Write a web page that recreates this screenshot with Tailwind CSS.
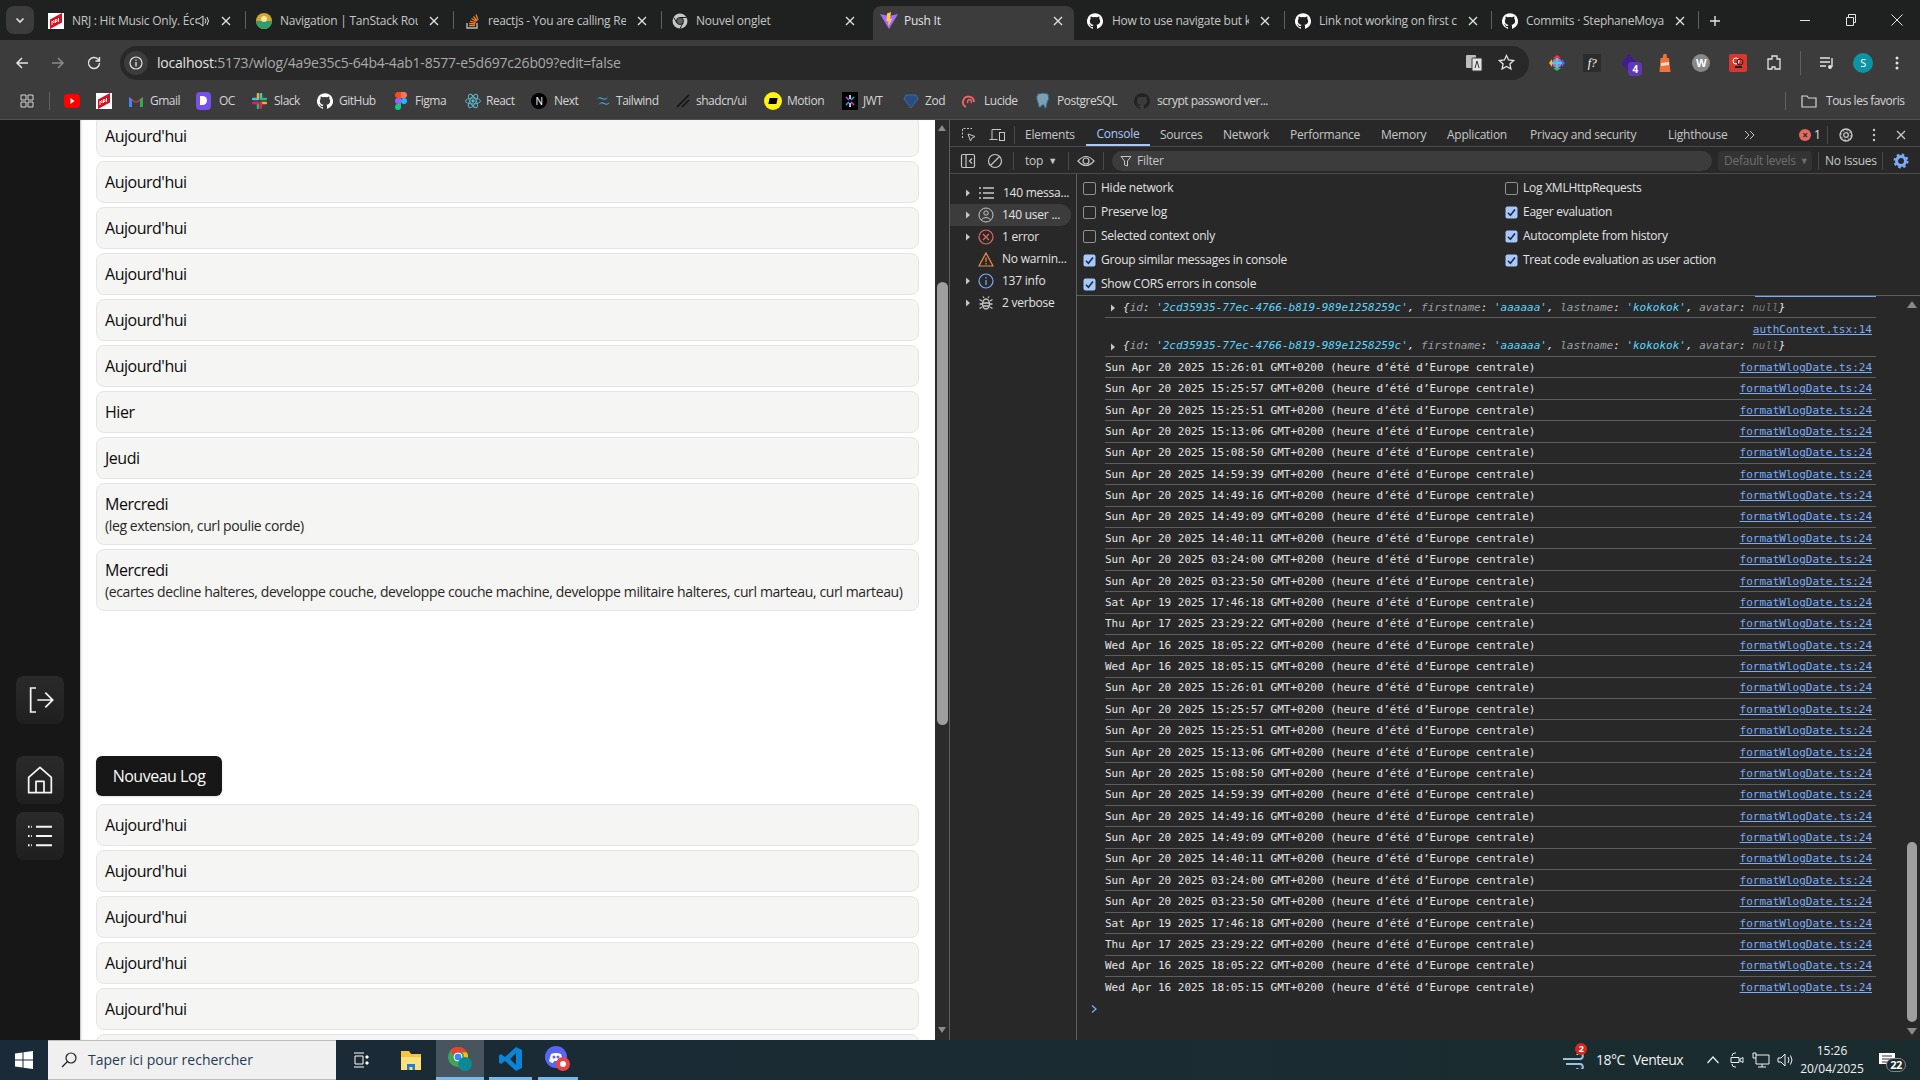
<!DOCTYPE html>
<html lang="fr">
<head>
<meta charset="utf-8">
<title>Push It</title>
<script src="https://cdn.jsdelivr.net/npm/@tailwindcss/browser@4"></script>
</head>
<body class="w-[1920px] h-[1080px] overflow-hidden flex flex-col bg-[#282828] font-['Open_Sans',sans-serif] tracking-[-0.03em]">
<svg class="hidden" width="0" height="0">
<symbol id="x" viewBox="0 0 14 14"><path d="M3 3l8 8M11 3l-8 8" stroke="currentColor" stroke-width="1.3" fill="none"/></symbol>
<symbol id="gh" viewBox="0 0 24 24"><path fill="currentColor" d="M12 .3a12 12 0 0 0-3.8 23.4c.6.1.8-.3.8-.6v-2c-3.3.7-4-1.6-4-1.6-.6-1.4-1.4-1.8-1.4-1.8-1-.7.1-.7.1-.7 1.2.1 1.8 1.2 1.8 1.2 1 1.8 2.8 1.3 3.5 1 .1-.8.4-1.3.8-1.6-2.7-.3-5.5-1.3-5.5-6 0-1.2.5-2.3 1.3-3.1-.2-.4-.6-1.6 0-3.2 0 0 1-.3 3.4 1.2a11.5 11.5 0 0 1 6 0c2.3-1.5 3.3-1.2 3.3-1.2.7 1.6.2 2.8.1 3.2.8.8 1.3 1.9 1.3 3.1 0 4.6-2.8 5.7-5.5 6 .4.4.8 1.1.8 2.2v3.3c0 .3.2.7.8.6A12 12 0 0 0 12 .3"/></symbol>
<symbol id="nrj" viewBox="0 0 16 16"><rect width="16" height="16" fill="#fff"/><path d="M2 16V6.500L14 0v9.500z" fill="#d8101f"/><path d="M4 12V8l2 2V7M7.500 10V6.500h1.500v2H7.500M10.500 9V5" stroke="#fff" fill="none" stroke-width=".9"/></symbol>
<symbol id="chev" viewBox="0 0 10 10"><path d="M3 1.5l4 3.5-4 3.5z" fill="currentColor"/></symbol>
<symbol id="check" viewBox="0 0 13 13"><rect x=".5" y=".5" width="12" height="12" rx="2" fill="#a8c7fa"/><path d="M3 6.8l2.4 2.5L10 3.6" stroke="#1f2d45" stroke-width="1.6" fill="none"/></symbol>
</svg>

<!-- Tab strip -->
<div class="h-10 shrink-0 bg-[#1f2020] flex items-end text-xs text-[#c4c7c5] tracking-[-0.02em]">
  <div class="w-[40px] h-[34px] pl-[6px]"><div class="w-7 h-7 rounded-lg bg-[#3c3c3c] flex items-center justify-center"><svg width="12" height="12" viewBox="0 0 12 12"><path d="M2.5 4.5L6 8l3.5-3.5" stroke="#e3e3e3" stroke-width="1.6" fill="none"/></svg></div></div>
  <div class="w-[205px] h-[34px] flex items-center pl-2 pb-1"><svg class="w-4 h-4 shrink-0"><use href="#nrj"/></svg><span class="ml-2 w-[122px] overflow-hidden whitespace-nowrap">NRJ : Hit Music Only. Écoutez</span><svg class="w-4 h-4 shrink-0" viewBox="0 0 16 16"><path d="M2 6h3l4-3v10l-4-3H2zM11 5.5q2 2.500 0 5M13 4q3 4 0 8" stroke="#e3e3e3" fill="none"/></svg><svg class="w-[14px] h-[14px] ml-[9px] shrink-0 text-[#e3e3e3]"><use href="#x"/></svg></div>
  <i class="w-px h-[18px] mb-[11px] bg-[#5f6061]"></i>
  <div class="w-[207px] h-[34px] flex items-center pl-[10px] pb-1"><svg class="w-4 h-4 shrink-0" viewBox="0 0 16 16"><circle cx="8" cy="8" r="8" fill="#d9a62e"/><path d="M0 8a8 8 0 0 0 16 0z" fill="#2f9e6e"/><circle cx="8" cy="6" r="3" fill="#f2e7a0"/></svg><span class="ml-2 w-[138px] overflow-hidden whitespace-nowrap">Navigation | TanStack Router</span><svg class="w-[14px] h-[14px] ml-[9px] shrink-0 text-[#e3e3e3]"><use href="#x"/></svg></div>
  <i class="w-px h-[18px] mb-[11px] bg-[#5f6061]"></i>
  <div class="w-[207px] h-[34px] flex items-center pl-[10px] pb-1"><svg class="w-4 h-4 shrink-0" viewBox="0 0 16 16"><path d="M3 10v5h10v-5" stroke="#bcbbbb" stroke-width="1.4" fill="none"/><path d="M5 12.500h6M5.300 10.300l5.900.6M6 8l5.500 1.700M7.500 5.500l5 3M9.500 3.500l3.500 4.500M12 1.500l2 5.500" stroke="#f48024" stroke-width="1.300" fill="none"/></svg><span class="ml-2 w-[138px] overflow-hidden whitespace-nowrap">reactjs - You are calling ReactDOM</span><svg class="w-[14px] h-[14px] ml-[9px] shrink-0 text-[#e3e3e3]"><use href="#x"/></svg></div>
  <i class="w-px h-[18px] mb-[11px] bg-[#5f6061]"></i>
  <div class="w-[211px] h-[34px] flex items-center pl-[10px] pb-1"><svg class="w-4 h-4 shrink-0" viewBox="0 0 16 16"><circle cx="8" cy="8" r="7.500" fill="#c4c7c5"/><circle cx="8" cy="8" r="3.500" fill="#5f6368" stroke="#1f2020"/><path d="M8 4.500h6.500M5 10L1.800 4.500M11 10L8 15.500" stroke="#1f2020"/></svg><span class="ml-2 w-[138px] overflow-hidden whitespace-nowrap">Nouvel onglet</span><svg class="w-[14px] h-[14px] ml-[9px] shrink-0 text-[#e3e3e3]"><use href="#x"/></svg></div>
  <div class="w-[201px] h-[34px] flex items-center pl-[7px] pb-1 bg-[#3c3c3c] rounded-t-lg text-[#e3e3e3]"><svg class="w-[18px] h-[18px] shrink-0" viewBox="0 0 18 18"><path d="M0 2l9 15L18 2l-9 2z" fill="#a56bff"/><path d="M11 0L7 1.500 6.500 9l2 .5-.5 5 4.500-8-2.500.5z" fill="#ffcb3d"/></svg><span class="ml-[6px] w-[138px] overflow-hidden whitespace-nowrap">Push It</span><svg class="w-[14px] h-[14px] ml-[9px] shrink-0"><use href="#x"/></svg></div>
  <div class="w-[210px] h-[34px] flex items-center pl-[13px] pb-1"><svg class="w-4 h-4 shrink-0 text-white"><use href="#gh"/></svg><span class="ml-[9px] w-[137px] overflow-hidden whitespace-nowrap">How to use navigate but keep</span><svg class="w-[14px] h-[14px] ml-[9px] shrink-0 text-[#e3e3e3]"><use href="#x"/></svg></div>
  <i class="w-px h-[18px] mb-[11px] bg-[#5f6061]"></i>
  <div class="w-[206px] h-[34px] flex items-center pl-[10px] pb-1"><svg class="w-4 h-4 shrink-0 text-white"><use href="#gh"/></svg><span class="ml-2 w-[138px] overflow-hidden whitespace-nowrap">Link not working on first click</span><svg class="w-[14px] h-[14px] ml-[9px] shrink-0 text-[#e3e3e3]"><use href="#x"/></svg></div>
  <i class="w-px h-[18px] mb-[11px] bg-[#5f6061]"></i>
  <div class="w-[206px] h-[34px] flex items-center pl-[10px] pb-1"><svg class="w-4 h-4 shrink-0 text-white"><use href="#gh"/></svg><span class="ml-2 w-[138px] overflow-hidden whitespace-nowrap">Commits · StephaneMoya/push</span><svg class="w-[14px] h-[14px] ml-[9px] shrink-0 text-[#e3e3e3]"><use href="#x"/></svg></div>
  <i class="w-px h-[18px] mb-[11px] bg-[#5f6061]"></i>
  <div class="w-[32px] h-[34px] flex items-center justify-center pb-1"><svg width="12" height="12" viewBox="0 0 12 12"><path d="M6 1v10M1 6h10" stroke="#e3e3e3" stroke-width="1.400"/></svg></div>
  <div class="w-[51px]"></div>
  <div class="w-[46px] h-10 flex items-center justify-center"><svg width="10" height="10" viewBox="0 0 10 10"><path d="M0 5.500h10" stroke="#e3e3e3"/></svg></div>
  <div class="w-[46px] h-10 flex items-center justify-center"><svg width="12" height="12" viewBox="0 0 12 12"><path d="M1.500 3.500h7v8h-7zM3.500 3.500v-3h7v8h-2" stroke="#e3e3e3" fill="none"/></svg></div>
  <div class="w-[46px] h-10 flex items-center justify-center"><svg width="12" height="12" viewBox="0 0 12 12"><path d="M.5.500l11 11M11.500.500l-11 11" stroke="#e3e3e3"/></svg></div>
</div>

<!-- Address toolbar -->
<div class="h-[45px] shrink-0 bg-[#3c3c3c] flex items-center text-[#c7c7c7]">
  <div class="w-[40px] flex justify-center pl-1"><svg width="16" height="16" viewBox="0 0 16 16"><path d="M14 8H3M8 3L3 8l5 5" stroke="#e3e3e3" stroke-width="1.500" fill="none"/></svg></div>
  <div class="w-[36px] flex justify-center"><svg width="16" height="16" viewBox="0 0 16 16"><path d="M2 8h11M8 3l5 5-5 5" stroke="#8a8a8a" stroke-width="1.500" fill="none"/></svg></div>
  <div class="w-[36px] flex justify-center"><svg width="16" height="16" viewBox="0 0 16 16"><path d="M13.500 8a5.500 5.500 0 1 1-1.600-3.900L13.500 6M13.500 2v4h-4" stroke="#e3e3e3" stroke-width="1.400" fill="none"/></svg></div>
  <div class="ml-2 w-[1409px] h-[34px] rounded-full bg-[#282828] flex items-center pl-1 text-[#e3e3e3] text-sm">
    <div class="w-6 h-6 rounded-full bg-[#3c3c3c] flex items-center justify-center"><svg width="14" height="14" viewBox="0 0 14 14"><circle cx="7" cy="7" r="6" stroke="#e3e3e3" stroke-width="1.200" fill="none"/><path d="M7 6v4.500M7 3.500v1.300" stroke="#e3e3e3" stroke-width="1.300"/></svg></div>
    <span class="ml-[9px] whitespace-nowrap tracking-[-0.015em]">localhost<span class="text-[#a8abaa]">:5173/wlog/4a9e35c5-64b4-4ab1-8577-e5d697c26b09?edit=false</span></span>
    <div class="ml-auto w-[33px] flex justify-center"><svg width="18" height="18" viewBox="0 0 18 18"><rect x="1" y="1" width="10" height="13" rx="1" fill="#bdbdbd"/><rect x="7" y="4" width="10" height="13" rx="1" fill="#e3e3e3" stroke="#3c3c3c"/><path d="M10 14l2-7 2 7" stroke="#333" fill="none"/></svg></div>
    <div class="w-[33px] mr-[6px] flex justify-center"><svg width="17" height="17" viewBox="0 0 17 17"><path d="M8.500 1.500l2.100 4.500 5 .6-3.700 3.400 1 4.900-4.400-2.500-4.400 2.500 1-4.900L1.400 6.600l5-.6z" stroke="#e3e3e3" stroke-width="1.300" fill="none"/></svg></div>
  </div>
  <div class="w-[45px] flex justify-end pr-[8px]"><svg width="18" height="18" viewBox="0 0 18 18"><path d="M9 1l4 3H5z" fill="#f33"/><path d="M17 9l-3 4V5z" fill="#3d6cff"/><path d="M9 17l-4-3h8z" fill="#28c760"/><path d="M1 9l3-4v8z" fill="#ffc400"/><circle cx="9" cy="9" r="5" fill="#b56bd6"/><path d="M9 4v10M4 9h10" stroke="#3fd4d4" stroke-width="2"/></svg></div>
  <div class="w-[36px] flex justify-center"><span class="w-[18px] h-[18px] bg-[#2c2c2c] text-white italic text-[12px] text-center leading-[18px] font-['Liberation_Serif',serif]">f?</span></div>
  <div class="w-[37px] flex justify-center relative"><svg width="20" height="18" viewBox="0 0 20 18"><path d="M10 0l8 9-8 9-8-9z" fill="#3e1f8f"/></svg><span class="absolute left-[18px] top-[8px] w-[14px] h-[14px] rounded-sm bg-[#5f39b5] text-white font-bold text-[10px] text-center leading-[14px]">4</span></div>
  <div class="w-[36px] flex justify-center"><svg width="16" height="20" viewBox="0 0 16 20"><path d="M6.500 1h3l.5 4h2l1.500 14h-11L3.500 5h2z" fill="#f2703a"/><path d="M4 10l8-1v3l-8 1z" fill="#ffe0cc"/></svg></div>
  <div class="w-[36px] flex justify-center"><span class="w-[18px] h-[18px] rounded-full bg-[#888] text-white text-[11px] font-bold text-center leading-[18px]">W</span></div>
  <div class="w-[37px] flex justify-center"><svg width="18" height="18" viewBox="0 0 18 18"><rect width="18" height="18" rx="2" fill="#d8382e"/><circle cx="7" cy="7" r="3" stroke="#fff" fill="none"/><circle cx="11" cy="8" r="3" stroke="#222" fill="none"/><path d="M6 13h7" stroke="#222" stroke-width="2"/></svg></div>
  <div class="w-[36px] flex justify-center"><svg width="18" height="18" viewBox="0 0 18 18"><path d="M7 2h5v3h3v10h-5v-2h-3v2H3V5h4z" stroke="#e3e3e3" stroke-width="1.300" fill="none"/></svg></div>
  <i class="w-px h-6 ml-[8px] bg-[#5f6061]"></i>
  <div class="w-[52px] flex justify-center"><svg width="16" height="16" viewBox="0 0 16 16"><path d="M1 3h10M1 7h10M1 11h6" stroke="#e3e3e3" stroke-width="1.400"/><path d="M13 3v9" stroke="#e3e3e3" stroke-width="1.400"/><circle cx="11" cy="12" r="2" fill="#e3e3e3"/></svg></div>
  <div class="w-[20px] h-[20px] rounded-full bg-[#0b95a6] text-white text-[11px] text-center leading-[20px]">S</div>
  <div class="w-[38px] pl-[10px] flex justify-center"><svg width="16" height="16" viewBox="0 0 16 16"><circle cx="8" cy="3" r="1.500" fill="#e3e3e3"/><circle cx="8" cy="8" r="1.500" fill="#e3e3e3"/><circle cx="8" cy="13" r="1.500" fill="#e3e3e3"/></svg></div>
</div>

<!-- Bookmarks bar -->
<div class="h-[35px] shrink-0 bg-[#3c3c3c] border-b border-[#505050] pb-[3px] flex items-center text-xs text-[#d5d5d5] whitespace-nowrap">
  <div class="w-[49px] flex justify-center pl-1"><svg width="14" height="14" viewBox="0 0 14 14"><path d="M1 1h5v5H1zM8 1h5v5H8zM1 8h5v5H1zM8 8h5v5H8z" stroke="#d5d5d5" fill="none"/></svg></div>
  <i class="w-px h-[18px] bg-[#5f6061]"></i>
  <div class="w-[30px] flex justify-end"><svg width="16" height="16" viewBox="0 0 16 16"><rect x="0" y="1" width="16" height="14" rx="3.500" fill="#f00"/><path d="M6.500 5l4 3-4 3z" fill="#fff"/></svg></div>
  <div class="w-[32px] flex justify-end"><svg class="w-4 h-4"><use href="#nrj"/></svg></div>
  <div class="w-[76px] pl-[16px] flex items-center"><svg class="w-4 h-4 shrink-0" viewBox="0 0 16 16"><path d="M1 14V4l7 5 7-5v10h-3V7.500L8 10 4 7.500V14z" fill="#ea4335"/><path d="M1 14V4l3 2.500V14z" fill="#4285f4"/><path d="M15 14V4l-3 2.500V14z" fill="#34a853"/></svg><span class="ml-[6px]">Gmail</span></div>
  <div class="w-[56px] flex items-center pl-[8px]"><span class="w-[15px] h-[18px] rounded-[4px] bg-[#7451eb] flex items-center justify-center"><i class="w-[7px] h-[9px] rounded-r-full bg-white"></i></span><span class="ml-[8px]">OC</span></div>
  <div class="w-[65px] flex items-center pl-[8px]"><svg class="w-[15px] h-[16px] shrink-0" viewBox="0 0 15 16"><path d="M1 6h5M9 1v5" stroke="#36c5f0" stroke-width="2.500" stroke-linecap="round"/><path d="M9 6h5M6 10v5" stroke="#2eb67d" stroke-width="2.500" stroke-linecap="round"/><path d="M9 10h5M6 1v4" stroke="#ecb22e" stroke-width="2.500" stroke-linecap="round"/><path d="M1 10h5M9 10v5" stroke="#e01e5a" stroke-width="2.500" stroke-linecap="round"/></svg><span class="ml-[7px]">Slack</span></div>
  <div class="w-[76px] flex items-center pl-[8px]"><svg class="w-4 h-4 shrink-0 text-white"><use href="#gh"/></svg><span class="ml-[6px]">GitHub</span></div>
  <div class="w-[72px] flex items-center pl-[10px]"><svg class="w-[12px] h-[18px] shrink-0" viewBox="0 0 12 18"><path d="M6 0H3a3 3 0 0 0 0 6h3z" fill="#f24e1e"/><path d="M6 0h3a3 3 0 0 1 0 6H6z" fill="#ff7262"/><path d="M6 6H3a3 3 0 0 0 0 6h3z" fill="#a259ff"/><circle cx="9" cy="9" r="3" fill="#1abcfe"/><path d="M6 12H3a3 3 0 1 0 3 3z" fill="#0acf83"/></svg><span class="ml-[8px]">Figma</span></div>
  <div class="w-[66px] flex items-center pl-[8px]"><svg class="w-4 h-4 shrink-0" viewBox="0 0 16 16" fill="none" stroke="#5fb5c9" stroke-width=".9"><ellipse cx="8" cy="8" rx="7.500" ry="3"/><ellipse cx="8" cy="8" rx="7.500" ry="3" transform="rotate(60 8 8)"/><ellipse cx="8" cy="8" rx="7.500" ry="3" transform="rotate(120 8 8)"/><circle cx="8" cy="8" r="1.200" fill="#5fb5c9"/></svg><span class="ml-[5px]">React</span></div>
  <div class="w-[64px] flex items-center pl-[8px]"><span class="w-4 h-4 shrink-0 rounded-full bg-black text-white text-[10px] text-center leading-4">N</span><span class="ml-[7px]">Next</span></div>
  <div class="w-[80px] flex items-center pl-[8px]"><svg class="w-4 h-4 shrink-0" viewBox="0 0 16 16"><path d="M1 7q3-4 6-2t6-1q-2 4-6 2T1 7zM3 12q3-4 6-2t6-1q-2 4-6 2-3-2-6 1z" fill="#38bdf8"/></svg><span class="ml-[5px]">Tailwind</span></div>
  <div class="w-[90px] flex items-center pl-[8px]"><svg class="w-[16px] h-4 shrink-0" viewBox="0 0 16 16"><path d="M2 14L14 2M7 14l7-7" stroke="#111" stroke-width="1.500"/></svg><span class="ml-[5px]">shadcn/ui</span></div>
  <div class="w-[77px] flex items-center pl-[7px]"><span class="w-[18px] h-[18px] shrink-0 rounded-full bg-[#fff312] flex items-center justify-center"><i class="w-2 h-[6px] bg-black -skew-x-12"></i></span><span class="ml-[5px]">Motion</span></div>
  <div class="w-[61px] flex items-center pl-[8px]"><svg class="w-4 h-[18px] shrink-0" viewBox="0 0 16 18"><rect width="16" height="18" fill="#000"/><path d="M8 3v4M8 11v4" stroke="#fff" stroke-width="1.500"/><path d="M4 5l3 3M12 13l-3-3" stroke="#d63aff" stroke-width="1.500"/><path d="M12 5l-3 3M4 13l3-3" stroke="#00b9f1" stroke-width="1.500"/></svg><span class="ml-[5px]">JWT</span></div>
  <div class="w-[58px] flex items-center pl-[8px]"><svg class="w-4 h-4 shrink-0" viewBox="0 0 16 16"><path d="M3 2h10l2 4-7 9-7-9z" fill="#274d82" stroke="#3e6ba8"/></svg><span class="ml-[6px]">Zod</span></div>
  <div class="w-[74px] flex items-center pl-[9px]"><svg class="w-[14px] h-4 shrink-0" viewBox="0 0 14 16"><path d="M4 14A5.500 5.500 0 1 1 12 9" stroke="#f56565" stroke-width="1.800" fill="none"/><path d="M6 10a2 2 0 1 1 3 0" stroke="#f56565" stroke-width="1.500" fill="none"/></svg><span class="ml-[8px]">Lucide</span></div>
  <div class="w-[99px] flex items-center pl-[8px]"><svg class="w-4 h-[18px] shrink-0" viewBox="0 0 16 18"><path d="M3 2q5-2 10 0 2 4-1 9l-1 5q-2 1-2-3H7q-1 3-3 2-1-5-2-7-1-4 1-6z" fill="#7d9fb3" stroke="#31648c"/></svg><span class="ml-[6px]">PostgreSQL</span></div>
  <div class="w-[660px] flex items-center pl-[8px]"><svg class="w-4 h-4 shrink-0 text-[#222]"><use href="#gh"/></svg><span class="ml-[7px] w-[120px]">scrypt password ver...</span><i class="w-px h-[18px] ml-[508px] bg-[#5f6061]"></i></div>
  <div class="flex items-center pl-[15px]"><svg class="shrink-0" width="16" height="14" viewBox="0 0 16 14"><path d="M1 2h5l1.500 2H15v9H1z" stroke="#d5d5d5" stroke-width="1.200" fill="none"/></svg><span class="ml-[9px]">Tous les favoris</span></div>
</div>

<!-- Content -->
<div class="flex-1 min-h-0 flex">
  <aside class="w-[80px] shrink-0 bg-[#171717] flex flex-col items-center pt-[556px]">
    <div class="w-12 h-12 rounded-lg bg-gradient-to-b from-[#2a2a2a] to-[#1f1f1f] flex items-center justify-center"><svg width="32" height="32" viewBox="0 0 24 24" fill="none" stroke="#f5f5f5" stroke-width="1.300"><path d="M9 3H5v18h4M10 12h11M16 6.500l5.500 5.500-5.500 5.500"/></svg></div>
    <div class="mt-8 w-12 h-12 rounded-lg bg-gradient-to-b from-[#2a2a2a] to-[#1f1f1f] flex items-center justify-center"><svg width="32" height="32" viewBox="0 0 24 24" fill="none" stroke="#f5f5f5" stroke-width="1.300" stroke-linejoin="round"><path d="M3.500 10L12 2.500 20.500 10v11.500h-17zM9 21.500V13h6v8.500"/></svg></div>
    <div class="mt-2 w-12 h-12 rounded-lg bg-gradient-to-b from-[#2a2a2a] to-[#1f1f1f] flex items-center justify-center"><svg width="32" height="32" viewBox="0 0 24 24" fill="none" stroke="#f5f5f5" stroke-width="1.500"><path d="M9 5h12M9 12h12M9 19h12"/><path d="M3 5h3M3 12h3M3 19h3" stroke-dasharray="1.200 1.200"/></svg></div>
  </aside>
  <main class="w-[855px] shrink-0 bg-white overflow-hidden shadow-[inset_2px_0_2px_-1px_#bbb] px-4 text-base text-stone-950 flex flex-col gap-1">
    <div class="-mt-[5px] shrink-0 p-2 border border-stone-200 rounded-lg bg-stone-100">Aujourd'hui</div>
    <div class="shrink-0 p-2 border border-stone-200 rounded-lg bg-stone-100">Aujourd'hui</div>
    <div class="shrink-0 p-2 border border-stone-200 rounded-lg bg-stone-100">Aujourd'hui</div>
    <div class="shrink-0 p-2 border border-stone-200 rounded-lg bg-stone-100">Aujourd'hui</div>
    <div class="shrink-0 p-2 border border-stone-200 rounded-lg bg-stone-100">Aujourd'hui</div>
    <div class="shrink-0 p-2 border border-stone-200 rounded-lg bg-stone-100">Aujourd'hui</div>
    <div class="shrink-0 p-2 border border-stone-200 rounded-lg bg-stone-100">Hier</div>
    <div class="shrink-0 p-2 border border-stone-200 rounded-lg bg-stone-100">Jeudi</div>
    <div class="shrink-0 p-2 border border-stone-200 rounded-lg bg-stone-100">Mercredi<p class="text-sm text-stone-800 tracking-[-0.027em]">(leg extension, curl poulie corde)</p></div>
    <div class="shrink-0 p-2 border border-stone-200 rounded-lg bg-stone-100 whitespace-nowrap">Mercredi<p class="text-sm text-stone-800 tracking-[-0.027em]">(ecartes decline halteres, developpe couche, developpe couche machine, developpe militaire halteres, curl marteau, curl marteau)</p></div>
    <button class="mt-[141px] mb-1 shrink-0 self-start w-[126px] h-10 rounded-md bg-[#171717] text-[#fafafa] shadow-sm">Nouveau Log</button>
    <div class="shrink-0 p-2 border border-stone-200 rounded-lg bg-stone-100">Aujourd'hui</div>
    <div class="shrink-0 p-2 border border-stone-200 rounded-lg bg-stone-100">Aujourd'hui</div>
    <div class="shrink-0 p-2 border border-stone-200 rounded-lg bg-stone-100">Aujourd'hui</div>
    <div class="shrink-0 p-2 border border-stone-200 rounded-lg bg-stone-100">Aujourd'hui</div>
    <div class="shrink-0 p-2 border border-stone-200 rounded-lg bg-stone-100">Aujourd'hui</div>
    <div class="shrink-0 p-2 border border-stone-200 rounded-lg bg-stone-100">Aujourd'hui</div>
  </main>
  <!-- page scrollbar -->
  <div class="w-[15px] shrink-0 bg-[#2b2b2b] flex flex-col items-center border-r border-[#5e5e5e]">
    <svg class="mt-[4px]" width="10" height="8" viewBox="0 0 10 8"><path d="M5 1l4 6H1z" fill="#8a8a8a"/></svg>
    <div class="mt-[150px] w-[11px] h-[443px] rounded-full bg-[#9e9e9e]"></div>
    <svg class="mt-auto mb-[6px]" width="10" height="8" viewBox="0 0 10 8"><path d="M5 7L1 1h8z" fill="#8a8a8a"/></svg>
  </div>

  <!-- DevTools -->
  <section class="flex-1 min-w-0 bg-[#282828] text-[#e3e3e3] text-xs tracking-[-0.02em] flex flex-col relative">
    <div class="h-[27px] shrink-0 border-b border-[#4a4a4a] pt-[4px] flex items-center text-[#c7c7c7] whitespace-nowrap">
      <div class="w-[28px] flex justify-end pr-[1px]"><svg width="16" height="16" viewBox="0 0 16 16" fill="none" stroke="#c7c7c7"><path d="M1.500 11V1.500H11" stroke-dasharray="2 1.500"/><path d="M7 7l7 2.500-3 1.500-1.500 3z"/></svg></div>
      <div class="w-[28px] flex justify-end"><svg width="17" height="15" viewBox="0 0 17 15" fill="none" stroke="#c7c7c7"><path d="M3 11V1.500h9M.5 11.500h8"/><rect x="10.500" y="4.500" width="5" height="8"/></svg></div>
      <i class="w-px h-[18px] ml-[8px] bg-[#4a4a4a]"></i>
      <div class="w-[71px] pl-[10px]">Elements</div>
      <div class="w-[64px] h-[22px] flex items-center justify-center text-[#a8c7fa] border-b-2 border-[#a8c7fa]">Console</div>
      <div class="w-[63px] pl-[10px]">Sources</div>
      <div class="w-[67px] pl-[10px]">Network</div>
      <div class="w-[91px] pl-[10px]">Performance</div>
      <div class="w-[66px] pl-[10px]">Memory</div>
      <div class="w-[83px] pl-[10px]">Application</div>
      <div class="w-[148px] pl-[10px]">Privacy and security</div>
      <div class="w-[75px]">Lighthouse</div>
      <svg width="12" height="12" viewBox="0 0 12 12" fill="none" stroke="#c7c7c7"><path d="M2 2l4 4-4 4M7 2l4 4-4 4"/></svg>
      <div class="ml-[44px] w-[26px] flex items-center"><span class="w-3 h-3 rounded-full bg-[#e46962] text-[#282828] text-[10px] leading-3 text-center font-bold">×</span><span class="ml-[3px] text-[#e3e3e3]">1</span></div>
      <i class="w-px h-[18px] ml-[2px] bg-[#4a4a4a]"></i>
      <div class="w-[36px] flex justify-center"><svg width="16" height="16" viewBox="0 0 16 16" fill="none" stroke="#c7c7c7" stroke-width="1.300"><circle cx="8" cy="8" r="2.300"/><circle cx="8" cy="8" r="5.200" stroke-width="2.600" stroke-dasharray="2 2" opacity=".5"/><circle cx="8" cy="8" r="6"/></svg></div>
      <div class="w-[20px] flex justify-center"><svg width="4" height="14" viewBox="0 0 4 14"><circle cx="2" cy="2" r="1.200" fill="#c7c7c7"/><circle cx="2" cy="7" r="1.200" fill="#c7c7c7"/><circle cx="2" cy="12" r="1.200" fill="#c7c7c7"/></svg></div>
      <div class="w-[34px] flex justify-center"><svg width="14" height="14"><use href="#x"/></svg></div>
    </div>
    <div class="h-[27px] shrink-0 border-b border-[#4a4a4a] pt-[2px] flex items-center text-[#c7c7c7] whitespace-nowrap">
      <div class="w-[26px] flex justify-end"><svg width="16" height="16" viewBox="0 0 16 16" fill="none" stroke="#c7c7c7" stroke-width="1.200"><rect x="1.500" y="1.500" width="13" height="13" rx="1.500"/><path d="M6 2v12M12 5.500L9.500 8l2.500 2.500" /></svg></div>
      <div class="w-[27px] flex justify-end"><svg width="16" height="16" viewBox="0 0 16 16" fill="none" stroke="#c7c7c7" stroke-width="1.200"><circle cx="8" cy="8" r="6.500"/><path d="M3.500 12.500l9-9"/></svg></div>
      <i class="w-px h-[18px] ml-[10px] bg-[#4a4a4a]"></i>
      <div class="w-[54px] pl-[11px] flex items-center">top<span class="ml-[5px] text-[9px]">▼</span></div>
      <i class="w-px h-[18px] bg-[#4a4a4a]"></i>
      <div class="w-[34px] flex justify-center"><svg width="18" height="14" viewBox="0 0 18 14" fill="none" stroke="#c7c7c7" stroke-width="1.200"><path d="M1 7q8-9 16 0-8 9-16 0z"/><circle cx="9" cy="7" r="3"/></svg></div>
      <i class="w-px h-[18px] bg-[#4a4a4a]"></i>
      <div class="ml-[8px] w-[600px] h-5 rounded-full bg-[#3c3c3c] flex items-center pl-[8px]"><svg width="12" height="12" viewBox="0 0 12 12" fill="none" stroke="#c7c7c7"><path d="M1 1.500h10L7.500 6v5l-3-1V6z"/></svg><span class="ml-[5px]">Filter</span></div>
      <div class="ml-[6px] w-[94px] h-5 rounded bg-[#333333] text-[#6f6f6f] flex items-center pl-[6px]">Default levels<span class="ml-[4px] text-[9px]">▼</span></div>
      <i class="w-px h-[18px] ml-[6px] bg-[#4a4a4a]"></i>
      <div class="w-[63px] pl-[6px]">No Issues</div>
      <i class="w-px h-[18px] bg-[#4a4a4a]"></i>
      <div class="w-[35px] flex justify-center"><svg width="16" height="16" viewBox="0 0 16 16"><circle cx="8" cy="8" r="4.500" fill="none" stroke="#7cacf8" stroke-width="3"/><circle cx="8" cy="8" r="6.500" fill="none" stroke="#7cacf8" stroke-width="2" stroke-dasharray="2.500 2.600"/></svg></div>
    </div>
    <div class="flex-1 min-h-0 flex">
      <!-- Console sidebar -->
      <div class="w-[127px] shrink-0 border-r border-[#5e5e5e] pt-[8px] pr-[5px] whitespace-nowrap">
        <div class="h-[22px] flex items-center pl-[13px]"><svg class="w-[10px] h-[10px] text-[#c7c7c7]"><use href="#chev"/></svg><svg class="ml-[6px]" width="16" height="14" viewBox="0 0 16 14"><path d="M0 2h2M0 7h2M0 12h2M4 2h11M4 7h11M4 12h11" stroke="#c7c7c7" stroke-width="1.300"/></svg><span class="ml-[8px] w-[66px]">140 messa...</span></div>
        <div class="h-[22px] flex items-center pl-[13px] bg-[#3c3c3c] rounded-r-full"><svg class="w-[10px] h-[10px] text-[#c7c7c7]"><use href="#chev"/></svg><svg class="ml-[5px]" width="16" height="16" viewBox="0 0 16 16" fill="none" stroke="#c7c7c7"><circle cx="8" cy="8" r="7"/><circle cx="8" cy="6" r="2.200"/><path d="M3.500 12.500q4.500-4 9 0"/></svg><span class="ml-[8px]">140 user ...</span></div>
        <div class="h-[22px] flex items-center pl-[13px]"><svg class="w-[10px] h-[10px] text-[#c7c7c7]"><use href="#chev"/></svg><svg class="ml-[5px]" width="16" height="16" viewBox="0 0 16 16" fill="none" stroke="#e46962" stroke-width="1.200"><circle cx="8" cy="8" r="7"/><path d="M5 5l6 6M11 5l-6 6"/></svg><span class="ml-[8px]">1 error</span></div>
        <div class="h-[22px] flex items-center pl-[28px]"><svg width="16" height="15" viewBox="0 0 16 15" fill="none" stroke="#ee8a4a" stroke-width="1.200"><path d="M8 1l7 13H1zM8 5.500v4.500M8 11v1.500"/></svg><span class="ml-[8px]">No warnin...</span></div>
        <div class="h-[22px] flex items-center pl-[13px]"><svg class="w-[10px] h-[10px] text-[#c7c7c7]"><use href="#chev"/></svg><svg class="ml-[5px]" width="16" height="16" viewBox="0 0 16 16" fill="none" stroke="#7cacf8" stroke-width="1.200"><circle cx="8" cy="8" r="7"/><path d="M8 7v5M8 4v1.500"/></svg><span class="ml-[8px]">137 info</span></div>
        <div class="h-[22px] flex items-center pl-[13px]"><svg class="w-[10px] h-[10px] text-[#c7c7c7]"><use href="#chev"/></svg><svg class="ml-[5px]" width="16" height="16" viewBox="0 0 16 16" fill="none" stroke="#c7c7c7" stroke-width="1.300"><ellipse cx="8" cy="9" rx="3.500" ry="5"/><path d="M4 6L1.500 4.500M12 6l2.500-1.500M4 9H1.500M12 9h2.500M4 12l-2.500 1.500M12 12l2.500 1.500M6 3L5 1.500M10 3l1-1.500M5 8h6M5 11h6"/></svg><span class="ml-[8px]">2 verbose</span></div>
      </div>
      <div class="flex-1 min-w-0 flex flex-col">
        <!-- Settings -->
        <div class="h-[122px] shrink-0 border-b border-[#5e5e5e] pt-[2px] grid grid-cols-[422px_1fr] auto-rows-[24px] pl-[6px] whitespace-nowrap">
          <label class="flex items-center gap-[4px]"><i class="w-[13px] h-[13px] rounded-[2px] border border-[#8e918f] mr-[1px]"></i>Hide network</label>
          <label class="flex items-center gap-[4px]"><i class="w-[13px] h-[13px] rounded-[2px] border border-[#8e918f] mr-[1px]"></i>Log XMLHttpRequests</label>
          <label class="flex items-center gap-[4px]"><i class="w-[13px] h-[13px] rounded-[2px] border border-[#8e918f] mr-[1px]"></i>Preserve log</label>
          <label class="flex items-center gap-[5px]"><svg width="13" height="13"><use href="#check"/></svg>Eager evaluation</label>
          <label class="flex items-center gap-[4px]"><i class="w-[13px] h-[13px] rounded-[2px] border border-[#8e918f] mr-[1px]"></i>Selected context only</label>
          <label class="flex items-center gap-[5px]"><svg width="13" height="13"><use href="#check"/></svg>Autocomplete from history</label>
          <label class="flex items-center gap-[5px]"><svg width="13" height="13"><use href="#check"/></svg>Group similar messages in console</label>
          <label class="flex items-center gap-[5px]"><svg width="13" height="13"><use href="#check"/></svg>Treat code evaluation as user action</label>
          <label class="flex items-center gap-[5px]"><svg width="13" height="13"><use href="#check"/></svg>Show CORS errors in console</label>
        </div>
        <!-- Log -->
        <div class="flex-1 min-h-0 relative font-['DejaVu_Sans_Mono',monospace] text-[11px] tracking-normal whitespace-nowrap pl-[28px] w-[799px]">
          <div class="absolute right-0 top-0 w-[121px] h-px bg-[#7cacf8]"></div>
          <div class="h-[22px] border-b border-[#5e5e5e] pt-[3px] flex items-center italic"><svg class="ml-[3px] w-[10px] h-[10px] text-[#c7c7c7]"><use href="#chev"/></svg><span class="ml-[5px]">{<span class="text-[#9aa0a6]">id</span>: <span class="text-[#5cd5fb]">'2cd35935-77ec-4766-b819-989e1258259c'</span>, <span class="text-[#9aa0a6]">firstname</span>: <span class="text-[#5cd5fb]">'aaaaaa'</span>, <span class="text-[#9aa0a6]">lastname</span>: <span class="text-[#5cd5fb]">'kokokok'</span>, <span class="text-[#9aa0a6]">avatar</span>: <span class="text-[#777]">null</span>}</span></div>
          <div class="h-[39px] border-b border-[#5e5e5e] flex flex-col italic"><a class="self-end not-italic pr-[4px] mt-[3px] h-[17px] leading-[17px] text-[#7cacf8] underline">authContext.tsx:14</a><div class="flex items-center h-[17px]"><svg class="ml-[3px] w-[10px] h-[10px] text-[#c7c7c7]"><use href="#chev"/></svg><span class="ml-[5px]">{<span class="text-[#9aa0a6]">id</span>: <span class="text-[#5cd5fb]">'2cd35935-77ec-4766-b819-989e1258259c'</span>, <span class="text-[#9aa0a6]">firstname</span>: <span class="text-[#5cd5fb]">'aaaaaa'</span>, <span class="text-[#9aa0a6]">lastname</span>: <span class="text-[#5cd5fb]">'kokokok'</span>, <span class="text-[#9aa0a6]">avatar</span>: <span class="text-[#777]">null</span>}</span></div></div>
          <div class="h-[21.38px] border-b border-[#5e5e5e] pt-[2px] flex items-center justify-between pr-[4px]"><span>Sun Apr 20 2025 15:26:01 GMT+0200 (heure d’été d’Europe centrale)</span><a class="text-[#7cacf8] underline">formatWlogDate.ts:24</a></div>
          <div class="h-[21.38px] border-b border-[#5e5e5e] pt-[2px] flex items-center justify-between pr-[4px]"><span>Sun Apr 20 2025 15:25:57 GMT+0200 (heure d’été d’Europe centrale)</span><a class="text-[#7cacf8] underline">formatWlogDate.ts:24</a></div>
          <div class="h-[21.38px] border-b border-[#5e5e5e] pt-[2px] flex items-center justify-between pr-[4px]"><span>Sun Apr 20 2025 15:25:51 GMT+0200 (heure d’été d’Europe centrale)</span><a class="text-[#7cacf8] underline">formatWlogDate.ts:24</a></div>
          <div class="h-[21.38px] border-b border-[#5e5e5e] pt-[2px] flex items-center justify-between pr-[4px]"><span>Sun Apr 20 2025 15:13:06 GMT+0200 (heure d’été d’Europe centrale)</span><a class="text-[#7cacf8] underline">formatWlogDate.ts:24</a></div>
          <div class="h-[21.38px] border-b border-[#5e5e5e] pt-[2px] flex items-center justify-between pr-[4px]"><span>Sun Apr 20 2025 15:08:50 GMT+0200 (heure d’été d’Europe centrale)</span><a class="text-[#7cacf8] underline">formatWlogDate.ts:24</a></div>
          <div class="h-[21.38px] border-b border-[#5e5e5e] pt-[2px] flex items-center justify-between pr-[4px]"><span>Sun Apr 20 2025 14:59:39 GMT+0200 (heure d’été d’Europe centrale)</span><a class="text-[#7cacf8] underline">formatWlogDate.ts:24</a></div>
          <div class="h-[21.38px] border-b border-[#5e5e5e] pt-[2px] flex items-center justify-between pr-[4px]"><span>Sun Apr 20 2025 14:49:16 GMT+0200 (heure d’été d’Europe centrale)</span><a class="text-[#7cacf8] underline">formatWlogDate.ts:24</a></div>
          <div class="h-[21.38px] border-b border-[#5e5e5e] pt-[2px] flex items-center justify-between pr-[4px]"><span>Sun Apr 20 2025 14:49:09 GMT+0200 (heure d’été d’Europe centrale)</span><a class="text-[#7cacf8] underline">formatWlogDate.ts:24</a></div>
          <div class="h-[21.38px] border-b border-[#5e5e5e] pt-[2px] flex items-center justify-between pr-[4px]"><span>Sun Apr 20 2025 14:40:11 GMT+0200 (heure d’été d’Europe centrale)</span><a class="text-[#7cacf8] underline">formatWlogDate.ts:24</a></div>
          <div class="h-[21.38px] border-b border-[#5e5e5e] pt-[2px] flex items-center justify-between pr-[4px]"><span>Sun Apr 20 2025 03:24:00 GMT+0200 (heure d’été d’Europe centrale)</span><a class="text-[#7cacf8] underline">formatWlogDate.ts:24</a></div>
          <div class="h-[21.38px] border-b border-[#5e5e5e] pt-[2px] flex items-center justify-between pr-[4px]"><span>Sun Apr 20 2025 03:23:50 GMT+0200 (heure d’été d’Europe centrale)</span><a class="text-[#7cacf8] underline">formatWlogDate.ts:24</a></div>
          <div class="h-[21.38px] border-b border-[#5e5e5e] pt-[2px] flex items-center justify-between pr-[4px]"><span>Sat Apr 19 2025 17:46:18 GMT+0200 (heure d’été d’Europe centrale)</span><a class="text-[#7cacf8] underline">formatWlogDate.ts:24</a></div>
          <div class="h-[21.38px] border-b border-[#5e5e5e] pt-[2px] flex items-center justify-between pr-[4px]"><span>Thu Apr 17 2025 23:29:22 GMT+0200 (heure d’été d’Europe centrale)</span><a class="text-[#7cacf8] underline">formatWlogDate.ts:24</a></div>
          <div class="h-[21.38px] border-b border-[#5e5e5e] pt-[2px] flex items-center justify-between pr-[4px]"><span>Wed Apr 16 2025 18:05:22 GMT+0200 (heure d’été d’Europe centrale)</span><a class="text-[#7cacf8] underline">formatWlogDate.ts:24</a></div>
          <div class="h-[21.38px] border-b border-[#5e5e5e] pt-[2px] flex items-center justify-between pr-[4px]"><span>Wed Apr 16 2025 18:05:15 GMT+0200 (heure d’été d’Europe centrale)</span><a class="text-[#7cacf8] underline">formatWlogDate.ts:24</a></div>
          <div class="h-[21.38px] border-b border-[#5e5e5e] pt-[2px] flex items-center justify-between pr-[4px]"><span>Sun Apr 20 2025 15:26:01 GMT+0200 (heure d’été d’Europe centrale)</span><a class="text-[#7cacf8] underline">formatWlogDate.ts:24</a></div>
          <div class="h-[21.38px] border-b border-[#5e5e5e] pt-[2px] flex items-center justify-between pr-[4px]"><span>Sun Apr 20 2025 15:25:57 GMT+0200 (heure d’été d’Europe centrale)</span><a class="text-[#7cacf8] underline">formatWlogDate.ts:24</a></div>
          <div class="h-[21.38px] border-b border-[#5e5e5e] pt-[2px] flex items-center justify-between pr-[4px]"><span>Sun Apr 20 2025 15:25:51 GMT+0200 (heure d’été d’Europe centrale)</span><a class="text-[#7cacf8] underline">formatWlogDate.ts:24</a></div>
          <div class="h-[21.38px] border-b border-[#5e5e5e] pt-[2px] flex items-center justify-between pr-[4px]"><span>Sun Apr 20 2025 15:13:06 GMT+0200 (heure d’été d’Europe centrale)</span><a class="text-[#7cacf8] underline">formatWlogDate.ts:24</a></div>
          <div class="h-[21.38px] border-b border-[#5e5e5e] pt-[2px] flex items-center justify-between pr-[4px]"><span>Sun Apr 20 2025 15:08:50 GMT+0200 (heure d’été d’Europe centrale)</span><a class="text-[#7cacf8] underline">formatWlogDate.ts:24</a></div>
          <div class="h-[21.38px] border-b border-[#5e5e5e] pt-[2px] flex items-center justify-between pr-[4px]"><span>Sun Apr 20 2025 14:59:39 GMT+0200 (heure d’été d’Europe centrale)</span><a class="text-[#7cacf8] underline">formatWlogDate.ts:24</a></div>
          <div class="h-[21.38px] border-b border-[#5e5e5e] pt-[2px] flex items-center justify-between pr-[4px]"><span>Sun Apr 20 2025 14:49:16 GMT+0200 (heure d’été d’Europe centrale)</span><a class="text-[#7cacf8] underline">formatWlogDate.ts:24</a></div>
          <div class="h-[21.38px] border-b border-[#5e5e5e] pt-[2px] flex items-center justify-between pr-[4px]"><span>Sun Apr 20 2025 14:49:09 GMT+0200 (heure d’été d’Europe centrale)</span><a class="text-[#7cacf8] underline">formatWlogDate.ts:24</a></div>
          <div class="h-[21.38px] border-b border-[#5e5e5e] pt-[2px] flex items-center justify-between pr-[4px]"><span>Sun Apr 20 2025 14:40:11 GMT+0200 (heure d’été d’Europe centrale)</span><a class="text-[#7cacf8] underline">formatWlogDate.ts:24</a></div>
          <div class="h-[21.38px] border-b border-[#5e5e5e] pt-[2px] flex items-center justify-between pr-[4px]"><span>Sun Apr 20 2025 03:24:00 GMT+0200 (heure d’été d’Europe centrale)</span><a class="text-[#7cacf8] underline">formatWlogDate.ts:24</a></div>
          <div class="h-[21.38px] border-b border-[#5e5e5e] pt-[2px] flex items-center justify-between pr-[4px]"><span>Sun Apr 20 2025 03:23:50 GMT+0200 (heure d’été d’Europe centrale)</span><a class="text-[#7cacf8] underline">formatWlogDate.ts:24</a></div>
          <div class="h-[21.38px] border-b border-[#5e5e5e] pt-[2px] flex items-center justify-between pr-[4px]"><span>Sat Apr 19 2025 17:46:18 GMT+0200 (heure d’été d’Europe centrale)</span><a class="text-[#7cacf8] underline">formatWlogDate.ts:24</a></div>
          <div class="h-[21.38px] border-b border-[#5e5e5e] pt-[2px] flex items-center justify-between pr-[4px]"><span>Thu Apr 17 2025 23:29:22 GMT+0200 (heure d’été d’Europe centrale)</span><a class="text-[#7cacf8] underline">formatWlogDate.ts:24</a></div>
          <div class="h-[21.38px] border-b border-[#5e5e5e] pt-[2px] flex items-center justify-between pr-[4px]"><span>Wed Apr 16 2025 18:05:22 GMT+0200 (heure d’été d’Europe centrale)</span><a class="text-[#7cacf8] underline">formatWlogDate.ts:24</a></div>
          <div class="h-[21.38px] pt-[2px] flex items-center justify-between pr-[4px]"><span>Wed Apr 16 2025 18:05:15 GMT+0200 (heure d’été d’Europe centrale)</span><a class="text-[#7cacf8] underline">formatWlogDate.ts:24</a></div>
          <svg class="mt-[6px] -ml-[16px]" width="10" height="10" viewBox="0 0 10 10"><path d="M3 1.500L7 5 3 8.500" stroke="#7cacf8" stroke-width="1.300" fill="none"/></svg>
          <!-- console scrollbar -->
          <svg class="absolute left-[830px] top-[5px]" width="10" height="7" viewBox="0 0 10 7"><path d="M5 0l5 7H0z" fill="#8a8a8a"/></svg>
          <div class="absolute left-[830px] top-[546px] w-[10px] h-[180px] rounded-full bg-[#9e9e9e]"></div>
          <svg class="absolute left-[830px] top-[732px]" width="10" height="7" viewBox="0 0 10 7"><path d="M5 7L0 0h10z" fill="#8a8a8a"/></svg>
        </div>
      </div>
    </div>
  </section>
</div>

<!-- Taskbar -->
<div class="h-10 shrink-0 bg-gradient-to-r from-[#1b2a38] to-[#1a2c2e] flex items-center text-[#f2f2f2] whitespace-nowrap">
  <div class="w-12 flex justify-center"><svg width="18" height="18" viewBox="0 0 18 18" fill="#fff"><path d="M0 2.500l7.500-1v7H0zM8.500 1.300L18 0v8.500H8.500zM0 9.500h7.500v7l-7.500-1zM8.500 9.500H18V18l-9.500-1.300z"/></svg></div>
  <div class="w-[288px] h-10 bg-[#f0f0f0] border-t border-b border-[#bdbdbd] flex items-center pl-[12px] text-[#1f3a55] text-sm tracking-normal"><svg width="18" height="18" viewBox="0 0 18 18" fill="none" stroke="#222" stroke-width="1.200"><circle cx="11" cy="7" r="5"/><path d="M7.500 10.500L2 16"/></svg><span class="ml-[10px]">Taper ici pour rechercher</span></div>
  <div class="w-[50px] flex justify-center"><svg width="16" height="16" viewBox="0 0 16 16" fill="none" stroke="#fff"><path d="M1 1h10M1 15h10M2 4h8v8H2z"/><path d="M13 4h2v2h-2zM13 10h2v2h-2z" fill="#fff"/></svg></div>
  <div class="w-[50px] flex justify-center"><svg width="24" height="24" viewBox="0 0 24 24"><path d="M2 3h8l2 3h10v16H2z" fill="#f5c542"/><path d="M2 9h20v13H2z" fill="#ffdf7e"/><path d="M8 22v-6h8v6h-2.500v-3h-3v3z" fill="#1f7fd1"/></svg></div>
  <div class="w-[48px] h-10 bg-white/20 border-b-[3px] border-[#76b9ed] flex justify-center items-center"><svg width="26" height="26" viewBox="0 0 26 26"><circle cx="11" cy="11" r="10" fill="#3aa757"/><path d="M11 1a10 10 0 0 1 9 5.500H11A4.500 4.500 0 0 0 6.500 9L3 4.500A10 10 0 0 1 11 1z" fill="#ea4335"/><path d="M20 6.500A10 10 0 0 1 11 21l4-7a4.500 4.500 0 0 0 0-7.500z" fill="#fbbc05"/><circle cx="11" cy="11" r="4" fill="#4285f4" stroke="#fff"/><circle cx="18" cy="18" r="7" fill="#0b8a96"/></svg></div>
  <div class="w-[5px]"></div>
  <div class="w-[43px] h-10 border-b-[3px] border-[#76b9ed] flex justify-center items-center"><svg width="26" height="26" viewBox="0 0 26 26"><path d="M18 1l6 3v18l-6 3L7 15l-4 3-2-1.500V9.500L3 8l4 3zM18 7l-6 6 6 6z" fill="#0a84d6" fill-rule="evenodd"/></svg></div>
  <div class="w-[6px]"></div>
  <div class="w-[40px] h-10 border-b-[3px] border-[#76b9ed] flex justify-center items-center"><svg width="26" height="26" viewBox="0 0 26 26"><circle cx="11" cy="11" r="11" fill="#5865f2"/><path d="M6 8q5-2 10 0l2 7q-2 2-4 2l-1-2H9l-1 2q-2 0-4-2z" fill="#fff"/><circle cx="9" cy="11" r="1.500" fill="#5865f2"/><circle cx="13" cy="11" r="1.500" fill="#5865f2"/><circle cx="18" cy="18" r="7" fill="#ed4245"/><circle cx="18" cy="18" r="3" fill="#fff"/></svg></div>
  <div class="ml-auto w-[357px] flex items-center text-sm">
    <div class="w-[33px] relative"><svg width="24" height="18" viewBox="0 0 24 18" fill="none" stroke="#9cc0e0" stroke-width="2"><path d="M0 8h17a3 3 0 1 0-3-4M3 13h14a3 3 0 1 1-3 4"/></svg><span class="absolute left-[12px] -top-[8px] w-3 h-3 rounded-full bg-[#d9261c] text-white text-[9px] leading-3 text-center font-bold">2</span></div>
    <span class="w-[37px]">18°C</span>
    <span class="w-[60px]">Venteux</span>
    <div class="ml-[8px] w-6 flex justify-center"><svg width="14" height="10" viewBox="0 0 14 10" fill="none" stroke="#f2f2f2" stroke-width="1.200"><path d="M1.500 8L7 2l5.500 6"/></svg></div>
    <div class="w-6 flex justify-center"><svg width="14" height="18" viewBox="0 0 14 18" fill="none" stroke="#f2f2f2"><path d="M2 5q0-3 3-3h1M2 13q0 3 3 3h1M1 6.500h8v5H1zM10 8l3-1.500v5L10 10z"/></svg></div>
    <div class="w-6 flex justify-center"><svg width="18" height="16" viewBox="0 0 18 16" fill="none" stroke="#f2f2f2"><path d="M4 3V1H1v5h3M4 3h13v9H4zM10 12v3M6 15h8"/></svg></div>
    <div class="w-[23px] flex justify-center"><svg width="16" height="14" viewBox="0 0 16 14" fill="none" stroke="#f2f2f2"><path d="M1 5h3l4-4v12l-4-4H1zM11 4q2 3 0 6M13.500 2.500q3 4.500 0 9"/></svg></div>
    <div class="w-[72px] text-center text-xs leading-[18px] tracking-normal">15:26<br>20/04/2025</div>
    <div class="ml-[11px] relative"><svg width="16" height="14" viewBox="0 0 16 14"><path d="M0 0h16v11H0z" fill="#fff"/><path d="M3 3h10M3 6h10M3 9h7" stroke="#333"/></svg><span class="absolute left-[7px] top-[5px] w-[20px] h-[14px] rounded-full border border-[#888] bg-[#1a2c2e] text-white font-bold text-[11px] leading-[12px] text-center">22</span></div>
  </div>
</div>
</body>
</html>
